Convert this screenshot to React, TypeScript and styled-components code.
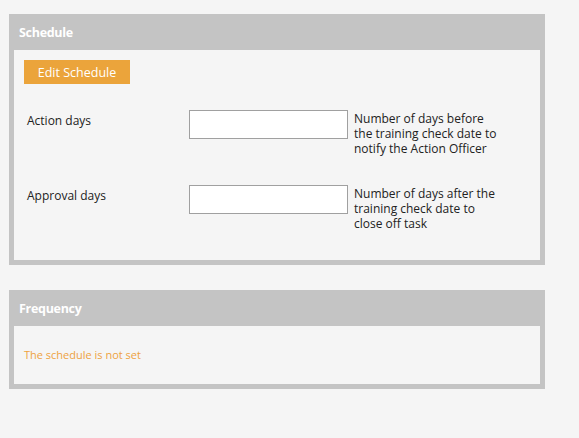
import { FC } from "react";
import styled, { createGlobalStyle } from "styled-components";

type Row = { id: string; label: string; help: string };

const rows: Row[] = [
  {
    id: "action",
    label: "Action days",
    help: "Number of days before the training check date to notify the Action Officer"
  },
  {
    id: "approval",
    label: "Approval days",
    help: "Number of days after the training check date to close off task"
  }
];

const App: FC = () => {
  return (
    <>
      <GlobalStyle />
      <StPage>
        <StPanel>
          <StPanelHeader>Schedule</StPanelHeader>
          <StScheduleBody>
            <StButton type="button">Edit Schedule</StButton>
            <StForm>
              {rows.map(r => (
                <StRow key={r.id}>
                  <StLabel htmlFor={r.id}>{r.label}</StLabel>
                  <StInput id={r.id} type="text" />
                  <StHelp>{r.help}</StHelp>
                </StRow>
              ))}
            </StForm>
          </StScheduleBody>
        </StPanel>

        <StPanel>
          <StPanelHeader>Frequency</StPanelHeader>
          <StFrequencyBody>
            <StNotice>The schedule is not set</StNotice>
          </StFrequencyBody>
        </StPanel>
      </StPage>
    </>
  );
};

export default App;

const GlobalStyle = createGlobalStyle`
  html, body {
    margin: 0;
    padding: 0;
    background: #f5f5f5;
  }
  body {
    font-family: "Open Sans", Lato, Arial, sans-serif;
    color: #222;
    min-height: 438px;
  }
`;

const StPage = styled.div`
  display: flex;
  flex-direction: column;
  gap: 25px;
  padding: 14px 0 0 9px;
`;

const StPanel = styled.section`
  width: 536px;
  box-sizing: border-box;
  background: #c4c4c4;
  padding: 0 5px 5px;
`;

const StPanelHeader = styled.h2`
  margin: 0;
  height: 36px;
  line-height: 37px;
  padding-left: 5px;
  font-size: 12.5px;
  font-weight: 700;
  color: #fff;
  letter-spacing: -0.3px;
`;

const StScheduleBody = styled.div`
  background: #f5f5f5;
  padding: 10px 10px 0;
`;

const StButton = styled.button`
  display: block;
  width: 106px;
  height: 24px;
  border: none;
  border-radius: 0;
  padding: 0;
  background: #eba43b;
  color: #fff;
  font-family: inherit;
  font-size: 12.5px;
  cursor: pointer;
`;

const StForm = styled.div`
  margin-top: 26px;
`;

const StRow = styled.div`
  display: flex;
  align-items: flex-start;
  height: 75px;
  padding-left: 3px;
`;

const StLabel = styled.label`
  width: 162px;
  padding-top: 3px;
  font-size: 12px;
  line-height: 15px;
`;

const StInput = styled.input`
  width: 159px;
  height: 29px;
  box-sizing: border-box;
  margin: 0;
  border: 1px solid #a0a0a0;
  background: #fff;
  font-family: inherit;
`;

const StHelp = styled.p`
  margin: 0 0 0 6px;
  width: 148px;
  padding-top: 1px;
  font-size: 12px;
  line-height: 15px;
`;

const StFrequencyBody = styled.div`
  background: #f5f5f5;
  padding: 22px 10px;
`;

const StNotice = styled.p`
  margin: 0;
  font-size: 11px;
  line-height: 14px;
  color: #eea23f;
`;
